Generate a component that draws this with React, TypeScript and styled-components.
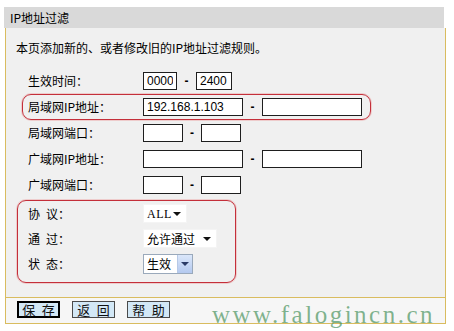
import React from "react";
import styled, { createGlobalStyle } from "styled-components";

const GOLD = "#d9bc5f";
const RED = "#c42f3a";

const GlobalStyle = createGlobalStyle`
  html, body {
    margin: 0;
    padding: 0;
    background: #ffffff;
  }
  body {
    font-family: "Noto Sans CJK SC", "Liberation Sans", sans-serif;
    font-size: 12px;
    color: #000;
  }
`;

const Page = styled.div`
  position: relative;
  width: 454px;
  height: 331px;
  padding: 7px 0 0 4px;
  box-sizing: border-box;
  overflow: hidden;
`;

const Header = styled.div`
  width: 440px;
  height: 21px;
  line-height: 21px;
  padding-left: 6px;
  box-sizing: border-box;
  background: #d9d9d9;
  font-size: 12px;
`;

const Panel = styled.div`
  margin-left: 1px;
  width: 441px;
  height: 269px;
  box-sizing: border-box;
  padding: 12px 0 0 10px;
  border-left: 1px solid ${GOLD};
  border-right: 1px solid ${GOLD};
  background: #f0f0f0;
`;

const Desc = styled.div`
  height: 16px;
  line-height: 16px;
  font-size: 12px;
`;

const Form = styled.div`
  margin: 12px 0 0 12px;
  display: flex;
  flex-direction: column;
`;

const Row = styled.div<{ $h?: number }>`
  display: grid;
  grid-template-columns: 115px auto;
  align-items: center;
  height: ${({ $h }) => $h ?? 26}px;
`;

const Label = styled.span`
  font-size: 12px;
  line-height: 16px;
  white-space: pre;
`;

const Fields = styled.div`
  display: flex;
  align-items: center;
`;

const Group = styled.div<{ $left: number; $width: number; $mt?: number; $pb?: number }>`
  margin-left: -${({ $left }) => $left}px;
  margin-top: ${({ $mt }) => $mt ?? 0}px;
  width: ${({ $width }) => $width}px;
  padding: 0 0 ${({ $pb }) => $pb ?? 0}px ${({ $left }) => $left - 1}px;
  box-sizing: border-box;
  border: 1px solid ${RED};
  border-radius: 9px;
  box-shadow: 0 0 0 1px rgba(236, 160, 160, 0.45);
`;

const TextBox = styled.input<{ $w: number }>`
  width: ${({ $w }) => $w}px;
  height: 18px;
  box-sizing: border-box;
  margin: 0;
  padding: 0 3px;
  border: 1px solid #1e1e1e;
  border-radius: 0;
  background: #fff;
  font-family: "Liberation Sans", sans-serif;
  font-size: 12px;
  color: #000;
  outline: none;
`;

const Dash = styled.span<{ $w: number }>`
  width: ${({ $w }) => $w}px;
  text-align: center;
  font-family: "Liberation Sans", sans-serif;
  font-size: 12px;
  font-weight: bold;
`;

const Select = styled.div<{ $w: number; $boxed?: boolean }>`
  position: relative;
  width: ${({ $w }) => $w}px;
  height: ${({ $boxed }) => ($boxed ? 20 : 19)}px;
  box-sizing: border-box;
  display: flex;
  align-items: center;
  padding-left: 3px;
  background: #fff;
  border: 1px solid ${({ $boxed }) => ($boxed ? "#9aa9bb" : "#f4f4f4")};
  font-size: 12px;
`;

const SelectText = styled.span<{ $serif?: boolean }>`
  flex: 1;
  font-family: ${({ $serif }) =>
    $serif ? `"Liberation Serif", serif` : `"Noto Sans CJK SC", sans-serif`};
  letter-spacing: ${({ $serif }) => ($serif ? "0.5px" : "0")};
  line-height: 16px;
`;

const Arrow = styled.span`
  width: 0;
  height: 0;
  margin-right: 5px;
  border-left: 4px solid transparent;
  border-right: 4px solid transparent;
  border-top: 4px solid #111;
`;

const DropButton = styled.span`
  width: 15px;
  height: 100%;
  display: flex;
  align-items: center;
  justify-content: center;
  box-sizing: border-box;
  border-left: 1px solid #b7c9e6;
  background: linear-gradient(#dbe7fa, #b4c9ef);
`;

const SmallArrow = styled.span`
  width: 0;
  height: 0;
  border-left: 4px solid transparent;
  border-right: 4px solid transparent;
  border-top: 4px solid #2b3b66;
`;

const ButtonBar = styled.div`
  margin-left: 1px;
  width: 441px;
  height: 27px;
  box-sizing: border-box;
  padding: 3px 0 0 11px;
  display: flex;
  gap: 12px;
  border: 1px solid ${GOLD};
  background: #f6f6f6;
`;

const Btn = styled.button<{ $primary?: boolean }>`
  width: 43px;
  height: 17px;
  margin: 0;
  padding: 0;
  box-sizing: border-box;
  border: ${({ $primary }) => ($primary ? "2px solid #000" : "1px solid #4a4a4a")};
  border-radius: 0;
  background: #d3e8f6;
  font-family: "Noto Sans CJK SC", sans-serif;
  font-size: 13px;
  line-height: 13px;
  color: #111;
  white-space: pre;
`;

const Watermark = styled.div`
  position: absolute;
  left: 212px;
  top: 301px;
  font-family: "Liberation Serif", serif;
  font-size: 25px;
  line-height: 28px;
  letter-spacing: 2.5px;
  color: rgba(80, 150, 100, 0.72);
  white-space: nowrap;
`;

const SP = "\u2002";

export default function App() {
  return (
    <>
      <GlobalStyle />
      <Page>
        <Header>IP地址过滤</Header>
        <Panel>
          <Desc>本页添加新的、或者修改旧的IP地址过滤规则。</Desc>
          <Form>
            <Row>
              <Label>生效时间：</Label>
              <Fields>
                <TextBox $w={34} readOnly value="0000" />
                <Dash $w={19}>-</Dash>
                <TextBox $w={36} readOnly value="2400" />
              </Fields>
            </Row>
            <Group $left={6} $width={349}>
              <Row $h={24}>
                <Label>局域网IP地址：</Label>
                <Fields>
                  <TextBox $w={100} readOnly value="192.168.1.103" />
                  <Dash $w={19}>-</Dash>
                  <TextBox $w={100} readOnly value="" />
                </Fields>
              </Row>
            </Group>
            <Row>
              <Label>局域网端口：</Label>
              <Fields>
                <TextBox $w={40} readOnly value="" />
                <Dash $w={18}>-</Dash>
                <TextBox $w={40} readOnly value="" />
              </Fields>
            </Row>
            <Row>
              <Label>广域网IP地址：</Label>
              <Fields>
                <TextBox $w={100} readOnly value="" />
                <Dash $w={19}>-</Dash>
                <TextBox $w={100} readOnly value="" />
              </Fields>
            </Row>
            <Row>
              <Label>广域网端口：</Label>
              <Fields>
                <TextBox $w={40} readOnly value="" />
                <Dash $w={18}>-</Dash>
                <TextBox $w={40} readOnly value="" />
              </Fields>
            </Row>
            <Group $left={11} $width={219} $mt={2} $pb={6}>
              <Row $h={25}>
                <Label>{`协${SP}议：`}</Label>
                <Fields>
                  <Select $w={44}>
                    <SelectText $serif>ALL</SelectText>
                    <Arrow />
                  </Select>
                </Fields>
              </Row>
              <Row $h={25}>
                <Label>{`通${SP}过：`}</Label>
                <Fields>
                  <Select $w={74}>
                    <SelectText>允许通过</SelectText>
                    <Arrow />
                  </Select>
                </Fields>
              </Row>
              <Row $h={25}>
                <Label>{`状${SP}态：`}</Label>
                <Fields>
                  <Select $w={50} $boxed>
                    <SelectText>生效</SelectText>
                    <DropButton>
                      <SmallArrow />
                    </DropButton>
                  </Select>
                </Fields>
              </Row>
            </Group>
          </Form>
        </Panel>
        <ButtonBar>
          <Btn $primary>{`保${SP}存`}</Btn>
          <Btn>{`返${SP}回`}</Btn>
          <Btn>{`帮${SP}助`}</Btn>
        </ButtonBar>
        <Watermark>www.falogincn.cn</Watermark>
      </Page>
    </>
  );
}
